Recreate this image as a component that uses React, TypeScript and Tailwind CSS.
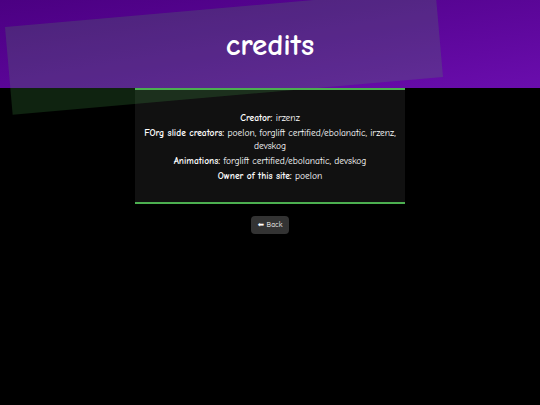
import React from 'react';

const credits = [
  { label: 'Creator:', value: 'irzenz' },
  { label: 'FOrg slide creators:', value: 'poelon, forglift certified/ebolanatic, irzenz, devskog' },
  { label: 'Animations:', value: 'forglift certified/ebolanatic, devskog' },
  { label: 'Owner of this site:', value: 'poelon' },
];

export default function App() {
  return (
    <div
      className="relative h-[405px] w-full overflow-hidden bg-black text-white"
      style={{ fontFamily: '"Comic Sans MS", "Comic Neue", "DejaVu Sans", sans-serif' }}
    >
      {/* Header */}
      <header className="relative flex h-[88px] items-center justify-center bg-gradient-to-br from-[#4b0082] to-[#6a0dad]">
        <h1 className="relative z-20 mt-[2px] text-[31px] font-bold leading-none">credits</h1>
      </header>

      {/* tilted glass band */}
      <div className="pointer-events-none absolute left-[8px] top-[8px] z-10 h-[88px] w-[432px] -rotate-5 bg-[rgba(76,175,80,0.2)]" />

      {/* Credits card */}
      <div className="mx-auto w-[270px] border-y-2 border-[#4caf50] bg-[#111111] px-[8px] pt-[21px] pb-[20px] text-center text-[9.5px] leading-[13px]">
        <div className="flex flex-col gap-[2px]">
          {credits.map((c) => (
            <p key={c.label}>
              <span className="font-bold">{c.label}</span> {c.value}
            </p>
          ))}
        </div>
      </div>

      <div className="mt-[12px] flex justify-center">
        <button className="h-[18px] rounded-[4px] bg-[#333333] px-[7px] text-[7.5px] leading-none text-white">
          ⬅ Back
        </button>
      </div>
    </div>
  );
}
